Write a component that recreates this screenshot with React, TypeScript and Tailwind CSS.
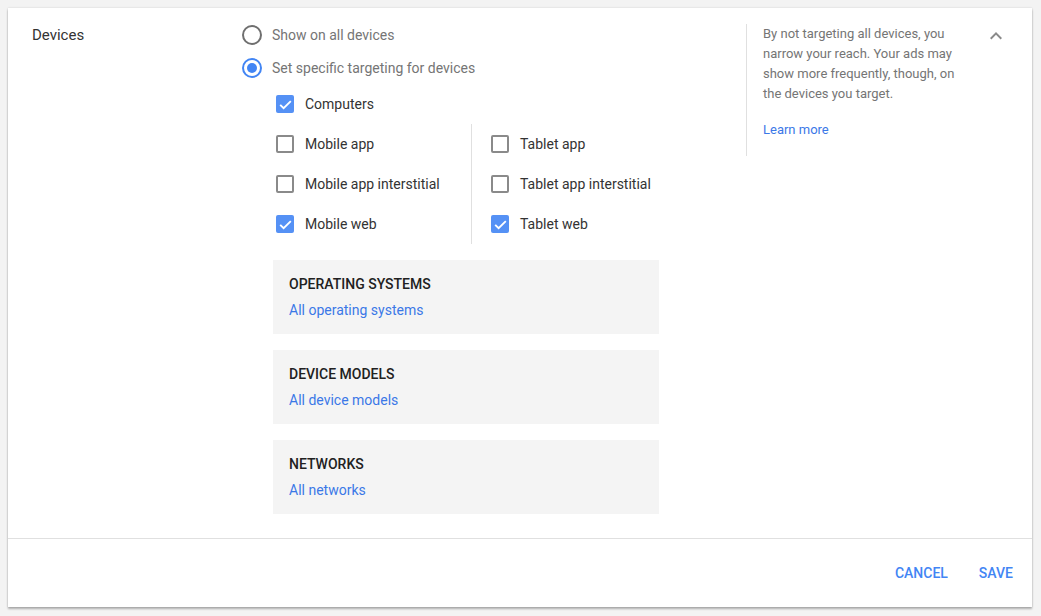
import React from "react";

const font = { fontFamily: "Roboto, 'Noto Sans', Arial, sans-serif" };

function Radio({ checked, label }: { checked?: boolean; label: string }) {
  return (
    <div className="flex items-center gap-2">
      <span className="flex h-6 w-6 items-center justify-center">
        <span
          className={
            checked
              ? "flex h-5 w-5 items-center justify-center rounded-full border-2 border-[#4285f4]"
              : "h-5 w-5 rounded-full border-2 border-[#6f6f6f]"
          }
        >
          {checked && <span className="h-[10px] w-[10px] rounded-full bg-[#4285f4]" />}
        </span>
      </span>
      <span className="text-[14px] leading-5 text-[#757575]">{label}</span>
    </div>
  );
}

function Checkbox({ checked, label }: { checked?: boolean; label: string }) {
  return (
    <div className="flex h-10 items-center gap-2">
      <span className="flex h-6 w-6 items-center justify-center">
        {checked ? (
          <span className="flex h-[18px] w-[18px] items-center justify-center rounded-[2px] bg-[#5591f5]">
            <svg width="15" height="15" viewBox="0 0 24 24" fill="none">
              <path d="M3.5 12.5l5.5 5.5L20.5 6.5" stroke="#fff" strokeWidth="3" />
            </svg>
          </span>
        ) : (
          <span className="h-[18px] w-[18px] rounded-[2px] border-2 border-[#8a8a8a]" />
        )}
      </span>
      <span className="text-[14px] leading-5 text-[#333]">{label}</span>
    </div>
  );
}

function Section({ title, link }: { title: string; link: string }) {
  return (
    <div className="w-[386px] bg-[#f4f4f4] px-4 pb-[14px] pt-[14px]">
      <div className="text-[14px] font-medium leading-5 text-[#212121]">{title}</div>
      <div className="mt-[6px] text-[14px] leading-5 text-[#3b78e7]">{link}</div>
    </div>
  );
}

export default function App() {
  return (
    <div className="min-h-[616px] bg-[#f3f3f3] pb-2 pl-2 pr-[9px] pt-2" style={font}>
      <div className="bg-white shadow-[0_2px_2px_rgba(0,0,0,0.28),0_0_2px_rgba(0,0,0,0.14)]">
        <div className="flex pb-6 pl-6 pr-6 pt-4">
          <div className="w-[208px] pt-[1px] text-[15px] leading-5 text-[#333]">Devices</div>

          <div className="flex-1">
            <div className="flex h-[22px] items-center">
              <Radio label="Show on all devices" />
            </div>
            <div className="mt-[11px] flex h-[22px] items-center">
              <Radio checked label="Set specific targeting for devices" />
            </div>

            <div className="ml-[33px] mt-[5px]">
              <Checkbox checked label="Computers" />
              <div className="flex">
                <div className="w-[199px] border-r border-[#e0e0e0]">
                  <Checkbox label="Mobile app" />
                  <Checkbox label="Mobile app interstitial" />
                  <Checkbox checked label="Mobile web" />
                </div>
                <div className="pl-4">
                  <Checkbox label="Tablet app" />
                  <Checkbox label="Tablet app interstitial" />
                  <Checkbox checked label="Tablet web" />
                </div>
              </div>

              <div className="mt-4 flex flex-col gap-4">
                <Section title="OPERATING SYSTEMS" link="All operating systems" />
                <Section title="DEVICE MODELS" link="All device models" />
                <Section title="NETWORKS" link="All networks" />
              </div>
            </div>
          </div>

          <div className="self-start w-[214px] border-l border-[#e0e0e0] pb-4 pl-4">
            <p className="text-[13px] leading-5 text-[#757575]">
              By not targeting all devices, you narrow your reach. Your ads may show more frequently, though, on
              the devices you target.
            </p>
            <div className="mt-4 text-[13px] leading-5 text-[#3b78e7]">Learn more</div>
          </div>

          <div className="ml-6 h-6 w-6">
            <svg width="24" height="24" viewBox="0 0 24 24">
              <path d="M12 8l-6 6 1.41 1.41L12 10.83l4.59 4.58L18 14z" fill="#8a8a8a" />
            </svg>
          </div>
        </div>

        <div className="flex h-[69px] items-center justify-end gap-[15px] border-t border-[#e0e0e0] pr-[11px]">
          <button className="px-2 text-[14px] font-medium text-[#4285f4]">CANCEL</button>
          <button className="px-2 text-[14px] font-medium text-[#4285f4]">SAVE</button>
        </div>
      </div>
    </div>
  );
}
